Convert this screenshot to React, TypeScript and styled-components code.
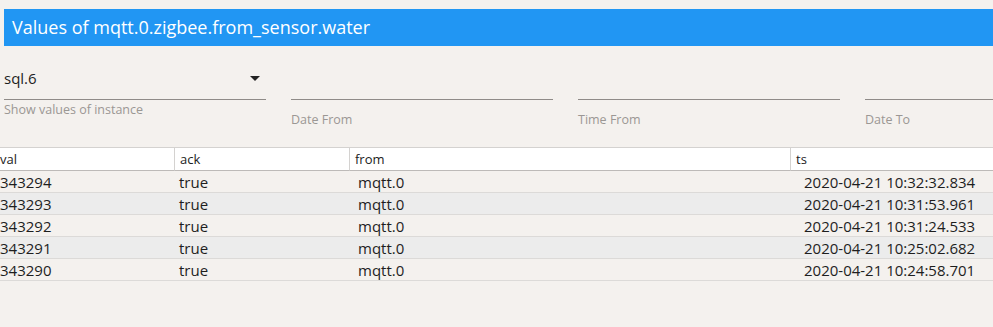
import React from 'react';
import styled, { createGlobalStyle } from 'styled-components';

const GlobalStyle = createGlobalStyle`
  html, body {
    margin: 0;
    padding: 0;
    background: #f4f1ee;
    font-family: 'Open Sans', 'Noto Sans', sans-serif;
    overflow: hidden;
  }
`;

const Page = styled.div`
  width: 993px;
  height: 327px;
  padding-top: 9px;
  box-sizing: border-box;
  overflow: hidden;
`;

const TitleBar = styled.div`
  margin-left: 4px;
  height: 37px;
  background: #2196f3;
  color: #ffffff;
  font-size: 18px;
  line-height: 37px;
  padding-left: 8px;
  white-space: nowrap;
`;

const Filters = styled.div`
  display: flex;
  gap: 25px;
  padding-left: 4px;
  height: 101px;
`;

const Field = styled.div`
  flex: 0 0 262px;
  display: flex;
  flex-direction: column;
`;

const SelectBox = styled.div`
  height: 54px;
  box-sizing: border-box;
  border-bottom: 1px solid #8f8b88;
  display: flex;
  align-items: center;
  justify-content: space-between;
  padding: 11px 6px 0 0;
  font-size: 15px;
  color: #1e1e1e;
`;

const Caret = styled.span`
  width: 0;
  height: 0;
  border-left: 5px solid transparent;
  border-right: 5px solid transparent;
  border-top: 5px solid #222;
`;

const InputLine = styled.div`
  height: 54px;
  border-bottom: 1px solid #8f8b88;
  box-sizing: border-box;
`;

const Hint = styled.div<{ $offset: number }>`
  margin-top: ${(p) => p.$offset}px;
  font-size: 12.5px;
  color: #9b9794;
  white-space: nowrap;
`;

const Table = styled.div`
  display: grid;
  grid-template-columns: 174px 175px 441px 1fr;
`;

const HeadCell = styled.div<{ $pad: number; $first?: boolean }>`
  background: #ffffff;
  height: 24px;
  box-sizing: border-box;
  border-top: 1px solid #d4d2d0;
  border-bottom: 1px solid #bdbab8;
  border-left: ${(p) => (p.$first ? 'none' : '1px solid #d4d2d0')};
  padding-left: ${(p) => p.$pad}px;
  font-size: 13px;
  line-height: 22px;
  color: #222;
  white-space: nowrap;
`;

const Cell = styled.div<{ $pad: number; $shade: boolean }>`
  background: ${(p) => (p.$shade ? '#ececec' : '#f4f1ee')};
  height: 22px;
  box-sizing: border-box;
  border-bottom: 1px solid #dcdad8;
  padding-left: ${(p) => p.$pad}px;
  font-size: 15px;
  line-height: 22px;
  color: #1e1e1e;
  white-space: nowrap;
`;

const rows = [
  { val: '343294', ack: 'true', from: 'mqtt.0', ts: '2020-04-21 10:32:32.834' },
  { val: '343293', ack: 'true', from: 'mqtt.0', ts: '2020-04-21 10:31:53.961' },
  { val: '343292', ack: 'true', from: 'mqtt.0', ts: '2020-04-21 10:31:24.533' },
  { val: '343291', ack: 'true', from: 'mqtt.0', ts: '2020-04-21 10:25:02.682' },
  { val: '343290', ack: 'true', from: 'mqtt.0', ts: '2020-04-21 10:24:58.701' },
];

const columns: { key: 'val' | 'ack' | 'from' | 'ts'; headPad: number; bodyPad: number }[] = [
  { key: 'val', headPad: 0, bodyPad: 0 },
  { key: 'ack', headPad: 5, bodyPad: 5 },
  { key: 'from', headPad: 5, bodyPad: 9 },
  { key: 'ts', headPad: 5, bodyPad: 14 },
];

const App: React.FC = () => (
  <Page>
    <GlobalStyle />
    <TitleBar>Values of mqtt.0.zigbee.from_sensor.water</TitleBar>
    <Filters>
      <Field>
        <SelectBox>
          <span>sql.6</span>
          <Caret />
        </SelectBox>
        <Hint $offset={1}>Show values of instance</Hint>
      </Field>
      <Field>
        <InputLine />
        <Hint $offset={11}>Date From</Hint>
      </Field>
      <Field>
        <InputLine />
        <Hint $offset={11}>Time From</Hint>
      </Field>
      <Field>
        <InputLine />
        <Hint $offset={11}>Date To</Hint>
      </Field>
    </Filters>
    <Table>
      {columns.map((c, i) => (
        <HeadCell key={c.key} $pad={c.headPad} $first={i === 0}>
          {c.key}
        </HeadCell>
      ))}
      {rows.map((r, ri) =>
        columns.map((c) => (
          <Cell key={`${ri}-${c.key}`} $pad={c.bodyPad} $shade={ri % 2 === 1}>
            {r[c.key]}
          </Cell>
        ))
      )}
    </Table>
  </Page>
);

export default App;
